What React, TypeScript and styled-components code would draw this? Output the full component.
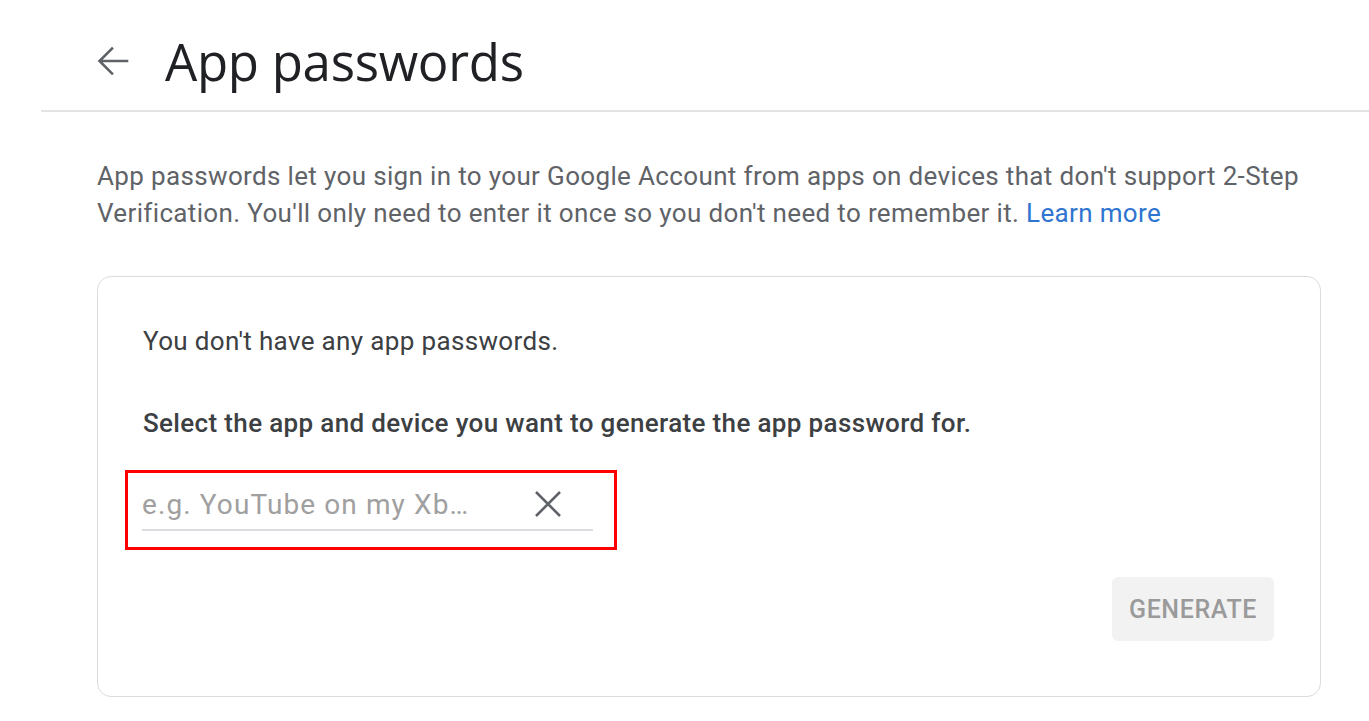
import React from "react";
import styled, { createGlobalStyle } from "styled-components";

const Global = createGlobalStyle`
  html, body { margin: 0; padding: 0; background: #ffffff; }
  body { font-family: Roboto, "Liberation Sans", Arial, sans-serif; }
`;

const Page = styled.div`
  width: 1369px;
  height: 721px;
  overflow: hidden;
  display: flex;
  flex-direction: column;
`;

const Header = styled.header`
  height: 112px;
  margin-left: 41px;
  padding: 12px 0 0 56px;
  border-bottom: 2px solid #e3e3e3;
  display: flex;
  align-items: center;
  gap: 36px;
  box-sizing: border-box;
`;

const BackButton = styled.button`
  width: 32px;
  height: 32px;
  padding: 0;
  border: none;
  background: none;
  display: flex;
  align-items: center;
  justify-content: center;
  color: #5f6368;
  cursor: pointer;
`;

const Title = styled.h1`
  margin: 0;
  font-family: "Open Sans", Roboto, sans-serif;
  font-weight: 400;
  font-size: 51px;
  color: #202124;
  letter-spacing: -0.3px;
`;

const Content = styled.main`
  padding: 46px 48px 0 97px;
  display: flex;
  flex-direction: column;
`;

const Intro = styled.p`
  margin: 0;
  font-size: 26px;
  line-height: 37px;
  color: #5f6368;
  letter-spacing: 0.35px;
`;

const Link = styled.a`
  color: #2f74d0;
  text-decoration: none;
`;

const Card = styled.section`
  margin-top: 44px;
  border: 1px solid #dadce0;
  border-radius: 14px;
  padding: 49px 46px 55px 45px;
  display: flex;
  flex-direction: column;
  height: 421px;
  box-sizing: border-box;
`;

const CardText = styled.p<{ $bold?: boolean }>`
  margin: 0 0 ${(p) => (p.$bold ? "32px" : "52px")};
  font-size: 26px;
  line-height: 30px;
  font-weight: ${(p) => (p.$bold ? 500 : 400)};
  color: #3c4043;
  letter-spacing: 0.35px;
`;

const Highlight = styled.div`
  align-self: flex-start;
  margin-left: -18px;
  border: 3px solid #ff0000;
  padding: 8px 21px 16px 14px;
  width: 492px;
  box-sizing: border-box;
`;

const Field = styled.div`
  display: flex;
  align-items: center;
  border-bottom: 2px solid #dadce0;
  height: 50px;
  box-sizing: border-box;
  padding-bottom: 2px;
`;

const Input = styled.input`
  flex: 1;
  min-width: 0;
  border: none;
  outline: none;
  background: transparent;
  font-family: Roboto, sans-serif;
  font-size: 28px;
  letter-spacing: 1.1px;
  color: #3c4043;
  padding: 0;
  &::placeholder { color: #a0a0a0; }
`;

const ClearButton = styled.button`
  width: 30px;
  height: 30px;
  padding: 0;
  border: none;
  background: none;
  display: flex;
  align-items: center;
  justify-content: center;
  margin-right: 30px;
  color: #5f6368;
`;

const Actions = styled.div`
  margin-top: auto;
  display: flex;
  justify-content: flex-end;
`;

const GenerateButton = styled.button`
  width: 162px;
  height: 64px;
  border: none;
  border-radius: 6px;
  background: #f2f2f2;
  color: #9a9a9a;
  font-family: Roboto, sans-serif;
  font-weight: 500;
  font-size: 25px;
  letter-spacing: 0.6px;
`;

export default function App() {
  return (
    <Page>
      <Global />
      <Header>
        <BackButton aria-label="Back">
          <svg width="32" height="32" viewBox="0 0 32 32" fill="none">
            <path
              d="M30 16H3M15 3.5 2.5 16 15 28.5"
              stroke="currentColor"
              strokeWidth="2.6"
              strokeLinecap="square"
            />
          </svg>
        </BackButton>
        <Title>App passwords</Title>
      </Header>
      <Content>
        <Intro>
          App passwords let you sign in to your Google Account from apps on devices that don't support 2-Step
          Verification. You'll only need to enter it once so you don't need to remember it.{" "}
          <Link href="#">Learn more</Link>
        </Intro>
        <Card>
          <CardText>You don't have any app passwords.</CardText>
          <CardText $bold>Select the app and device you want to generate the app password for.</CardText>
          <Highlight>
            <Field>
              <Input placeholder="e.g. YouTube on my Xb…" />
              <ClearButton aria-label="Clear">
                <svg width="28" height="28" viewBox="0 0 28 28" fill="none">
                  <path
                    d="M2 2 26 26M26 2 2 26"
                    stroke="currentColor"
                    strokeWidth="2.6"
                  />
                </svg>
              </ClearButton>
            </Field>
          </Highlight>
          <Actions>
            <GenerateButton disabled>GENERATE</GenerateButton>
          </Actions>
        </Card>
      </Content>
    </Page>
  );
}
